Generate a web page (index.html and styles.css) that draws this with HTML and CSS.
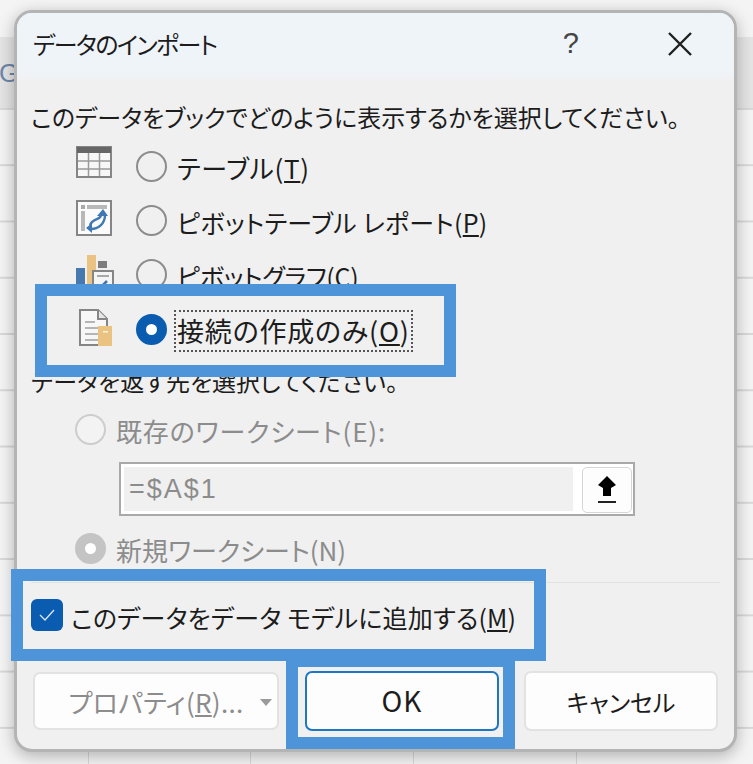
FILE: index.html
```html
<!DOCTYPE html>
<html lang="ja">
<head>
    <meta charset="UTF-8">
    <meta name="viewport" content="width=device-width, initial-scale=1.0">
    <title>データのインポート</title>
    <link rel="stylesheet" href="styles.css">
</head>
<body>
    <span class="sheet-letter">G</span>

    <div class="dialog">
        <div class="title-bar">
            <span class="title">データのインポート</span>
            <span class="help">?</span>
            <svg class="close" width="24" height="24" viewBox="0 0 24 24">
                <path d="M1 1 L23 23 M23 1 L1 23" stroke="#1f1f1f" stroke-width="2.4" fill="none"/>
            </svg>
        </div>

        <div class="content">
            <p class="line">このデータをブックでどのように表示するかを選択してください。</p>

            <div class="option option-first">
                <svg class="option-icon table-icon" width="36" height="32" viewBox="0 0 36 32">
                    <rect x="1" y="1" width="34" height="30" fill="#f7f7f7" stroke="#858585" stroke-width="2"/>
                    <rect x="1" y="1" width="34" height="6" fill="#666"/>
                    <path d="M12.5 7 V30 M23.5 7 V30 M2 15 H34 M2 23 H34" stroke="#9a9a9a" stroke-width="1.5"/>
                </svg>
                <span class="radio"></span>
                <span class="option-label label-table">テーブル(<u>T</u>)</span>
            </div>

            <div class="option">
                <svg class="option-icon pivot-icon" width="36" height="36" viewBox="0 0 36 36">
                    <rect x="1" y="1" width="34" height="34" fill="#fbfbfb" stroke="#858585" stroke-width="2"/>
                    <rect x="5" y="5" width="4" height="4" fill="#a8a8a8"/>
                    <rect x="11" y="5" width="20" height="4" fill="#b8b8b8"/>
                    <rect x="5" y="11" width="4" height="20" fill="#b8b8b8"/>
                    <path d="M25 15 C25 20 17 18 14 25" stroke="#3f78b5" stroke-width="2.4" fill="none"/>
                    <path d="M29 15 C29 24 22 29 15 29" stroke="#3f78b5" stroke-width="2.4" fill="none"/>
                    <path d="M21 16 L27 9 L32 16 Z M16 23 L10 28 L16 33 Z" fill="#3f78b5"/>
                </svg>
                <span class="radio"></span>
                <span class="option-label label-pivot">ピボットテーブル レポート(<u>P</u>)</span>
            </div>

            <div class="option">
                <svg class="option-icon chart-icon" width="38" height="36" viewBox="0 0 38 36">
                    <rect x="0" y="13" width="9" height="23" fill="#4679ad"/>
                    <rect x="11" y="0" width="9" height="36" fill="#eac382"/>
                    <rect x="22" y="6" width="9" height="7" fill="#7d7d7d"/>
                    <rect x="17" y="16" width="20" height="20" fill="#f5f5f5" stroke="#858585" stroke-width="2"/>
                    <path d="M21 21 H33" stroke="#a8a8a8" stroke-width="2"/>
                    <path d="M24 33 L31 26" stroke="#3f78b5" stroke-width="2.5"/>
                </svg>
                <span class="radio"></span>
                <span class="option-label label-chart">ピボットグラフ(<u>C</u>)</span>
            </div>

            <div class="option option-focused">
                <svg class="option-icon doc-icon" width="36" height="38" viewBox="-3 0 36 38">
                    <path d="M1 1 H19 L28 10 V36 H1 Z" fill="#f7f7f7" stroke="#858585" stroke-width="2"/>
                    <path d="M19 1 V10 H28" fill="#e6e6e6" stroke="#858585" stroke-width="2"/>
                    <path d="M6 13 H16 M6 19 H22 M6 25 H22 M6 31 H22" stroke="#a0a0a0" stroke-width="1.6"/>
                    <rect x="19" y="17" width="14" height="20" fill="#eac382"/>
                    <rect x="24" y="22" width="5" height="1.5" fill="#fff3dc"/>
                </svg>
                <span class="radio radio-on"></span>
                <span class="option-label label-conn focus-box">接続の作成のみ(<u>O</u>)</span>
            </div>

            <p class="line line-dest">データを返す先を選択してください。</p>

            <div class="dest-row">
                <span class="radio radio-disabled"></span>
                <span class="option-label label-exist disabled">既存のワークシート(E):</span>
            </div>

            <div class="ref-input">
                <span class="ref-value">=$A$1</span>
                <span class="ref-button">
                    <svg width="20" height="28" viewBox="0 0 20 28">
                        <path d="M10 0 L19 9 L14 12 V20 H6 V12 L1 9 Z" fill="#000"/>
                        <rect x="1" y="25" width="18" height="2" fill="#222"/>
                    </svg>
                </span>
            </div>

            <div class="dest-row dest-row-new">
                <span class="radio radio-disabled-on"></span>
                <span class="option-label label-new disabled">新規ワークシート(N)</span>
            </div>

            <div class="separator"></div>

            <div class="model-row">
                <span class="checkbox">
                    <svg width="16" height="12" viewBox="0 0 16 12">
                        <path d="M1 6 L6 11 L15 1" stroke="#dbe8f7" stroke-width="1.3" fill="none"/>
                    </svg>
                </span>
                <span class="option-label label-model">このデータをデータ モデルに追加する(<u>M</u>)</span>
            </div>

            <div class="buttons">
                <button type="button" class="btn btn-props">
                    <span>プロパティ(<u>R</u>)...</span>
                    <i class="caret"></i>
                </button>
                <button type="button" class="btn btn-ok">OK</button>
                <button type="button" class="btn btn-cancel">キャンセル</button>
            </div>
        </div>
    </div>

    <!-- annotation boxes drawn over the screenshot -->
    <div class="mark mark-option"></div>
    <div class="mark mark-model"></div>
    <div class="mark mark-ok"></div>
</body>
</html>
```

FILE: styles.css
```css
:root {
    --mark-color: #4e94d8;
    --text-color: #1c1c1c;
    --disabled-text: #8c8c8c;
    --dialog-bg: #f0f0f0;
    --sheet-line: #d8d8d8;
}

* {
    margin: 0;
    padding: 0;
    box-sizing: border-box;
}

html, body {
    height: 764px;
    overflow: hidden;
}

body {
    position: relative;
    padding: 10px 0 0 14px;
    font-family: "Noto Sans CJK JP", "Noto Sans", sans-serif;
    font-feature-settings: "palt";
    color: var(--text-color);
    background-color: #f4f4f4;
    background-image:
        linear-gradient(to bottom, transparent 37px, #e4e4e4 37px, #e4e4e4 108px, transparent 108px),
        linear-gradient(to bottom, var(--sheet-line) 1.5px, transparent 1.5px),
        linear-gradient(to right, transparent 88px, var(--sheet-line) 88px, var(--sheet-line) 89.5px, transparent 89.5px, transparent 250px, var(--sheet-line) 250px, var(--sheet-line) 251.5px, transparent 251.5px, transparent 413px, var(--sheet-line) 413px, var(--sheet-line) 414.5px, transparent 414.5px, transparent 576px, var(--sheet-line) 576px, var(--sheet-line) 577.5px, transparent 577.5px);
    background-size: 100% 100%, 100% 56.27px, 100% 14px;
    background-position: 0 0, 0 51.7px, 0 100%;
    background-repeat: no-repeat, repeat-y, no-repeat;
}

.sheet-letter {
    position: absolute;
    left: -1px;
    top: 58px;
    font-family: "Liberation Sans", sans-serif;
    font-size: 26px;
    color: #6d87a8;
}

.dialog {
    position: relative;
    width: 723px;
    height: 742px;
    background-color: var(--dialog-bg);
    border: 3px solid #b4b4b4;
    border-radius: 18px;
    box-shadow: 0 4px 16px rgba(0, 0, 0, 0.28);
    overflow: hidden;
}

.title-bar {
    display: flex;
    align-items: center;
    height: 67px;
    padding: 0 42px 6px 16px;
    background: linear-gradient(to bottom, #eff4f9 85%, #f0f1f3 100%);
}

.title {
    flex: 1;
    font-size: 24px;
    letter-spacing: -1.6px;
    line-height: 1;
}

.help {
    margin-right: 89px;
    font-family: "Liberation Sans", sans-serif;
    font-size: 29px;
    line-height: 1;
    color: #444;
}

.content {
    padding: 19px 14px 0 14px;
}

.line {
    height: 36px;
    font-size: 24px;
    line-height: 36px;
    white-space: nowrap;
}

.option {
    display: flex;
    align-items: center;
    height: 54px;
    padding-left: 45px;
}

.option-first {
    margin-top: 4px;
}

.option-focused {
    height: 56px;
}

.option-icon {
    flex: none;
    width: 36px;
}

.table-icon {
    margin-bottom: 9px;
}

.pivot-icon {
    margin-bottom: 5px;
}

.chart-icon {
    width: 38px;
    margin-right: -2px;
    margin-bottom: 2px;
}

.doc-icon {
    margin-bottom: 3px;
}

.radio {
    flex: none;
    width: 31px;
    height: 31px;
    margin-left: 24px;
    border: 2px solid #8c8c8c;
    border-radius: 50%;
}

.radio-on {
    border: 10px solid #0a5cb0;
    background-color: #fff;
}

.radio-disabled,
.radio-disabled-on {
    margin-left: 0;
}

.radio-disabled {
    border-color: #cdcdcd;
    background-color: #f3f3f3;
}

.radio-disabled-on {
    border: 10px solid #c4c4c4;
    background-color: #fff;
}

.option-label {
    margin-top: 4px;
    margin-left: 10px;
    font-size: 25px;
    line-height: 36px;
    white-space: nowrap;
}

.label-table {
    font-size: 26px;
    letter-spacing: 0.7px;
}

.label-pivot {
    letter-spacing: 0.3px;
}

.label-chart {
    letter-spacing: -0.3px;
}

.label-conn {
    font-size: 27px;
    letter-spacing: 0.8px;
}

.label-exist {
    font-size: 26px;
    letter-spacing: 0.85px;
}

.label-new {
    font-size: 26px;
}

.label-model {
    margin-top: 0;
    letter-spacing: 0.2px;
}

.focus-box {
    height: 42px;
    margin-top: 4px;
    margin-left: 7px;
    padding: 1px 1px 0 1px;
    border: 2px dotted #555;
}

.disabled {
    color: var(--disabled-text);
}

.line-dest {
    margin-top: 6px;
}

.dest-row {
    display: flex;
    align-items: center;
    height: 36px;
    margin-top: 12px;
    padding-left: 44px;
}

.dest-row-new {
    margin-top: 14px;
}

.ref-input {
    display: flex;
    align-items: stretch;
    width: 516px;
    height: 54px;
    margin: 15px 0 0 88px;
    padding: 3px 1px 1px 3px;
    background-color: #fff;
    border: 2px solid #a9a9a9;
}

.ref-value {
    flex: 1;
    margin: 0 9px 2px 0;
    padding-left: 5px;
    font-family: "Liberation Sans", sans-serif;
    font-size: 27px;
    letter-spacing: 2px;
    line-height: 44px;
    color: var(--disabled-text);
    background-color: var(--dialog-bg);
}

.ref-button {
    display: flex;
    align-items: center;
    justify-content: center;
    width: 50px;
    background-color: #fdfdfd;
    border: 1px solid #d6d6d6;
    border-radius: 5px;
}

.separator {
    height: 1px;
    margin-top: 16px;
    background-color: #e2e2e2;
}

.model-row {
    display: flex;
    align-items: center;
    height: 40px;
    margin-top: 14px;
}

.checkbox {
    display: flex;
    flex: none;
    align-items: center;
    justify-content: center;
    width: 32px;
    height: 32px;
    margin-top: -5px;
    background-color: #0a5cb0;
    border-radius: 6px;
}

.model-row .option-label {
    margin-left: 8px;
}

.buttons {
    display: flex;
    align-items: center;
    margin-top: 34px;
}

.btn {
    display: block;
    height: 60px;
    font-family: inherit;
    font-feature-settings: inherit;
    font-size: 24px;
    color: var(--text-color);
    background-color: #fdfdfd;
    border: 2px solid #e2e2e2;
    border-radius: 7px;
}

.btn-props {
    position: relative;
    display: flex;
    align-items: center;
    justify-content: center;
    width: 246px;
    height: 58px;
    margin-left: 2px;
    font-size: 26px;
    letter-spacing: 0.3px;
    color: var(--disabled-text);
}

.caret {
    position: absolute;
    right: 5px;
    top: 25px;
    border-left: 6px solid transparent;
    border-right: 6px solid transparent;
    border-top: 7px solid #9a9a9a;
}

.btn-ok {
    width: 194px;
    margin-left: 26px;
    padding-bottom: 2px;
    font-size: 28px;
    letter-spacing: 1px;
    border-color: #1c78c2;
}

.btn-cancel {
    width: 194px;
    margin-left: 25px;
}

.mark {
    position: absolute;
    border: 12px solid var(--mark-color);
}

.mark-option {
    left: 35px;
    top: 284px;
    width: 421px;
    height: 93px;
}

.mark-model {
    left: 11px;
    top: 569px;
    width: 535px;
    height: 92px;
}

.mark-ok {
    left: 286px;
    top: 655px;
    width: 229px;
    height: 94px;
}
```
